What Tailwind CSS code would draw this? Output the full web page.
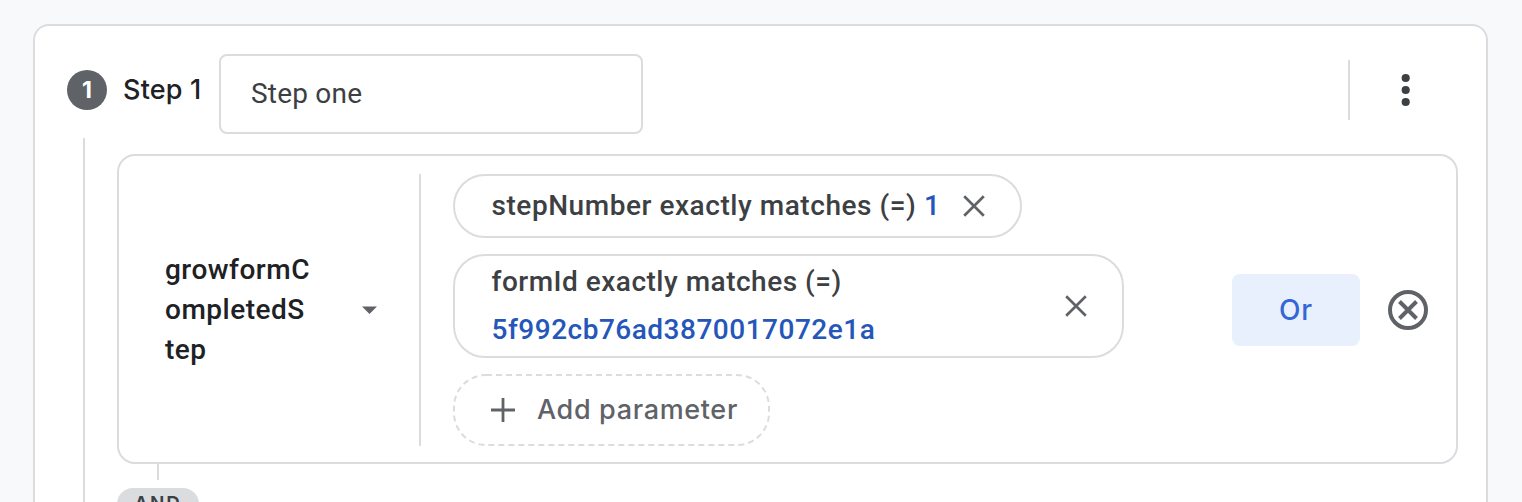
<!DOCTYPE html>
<html lang="en">
<head>
<meta charset="utf-8">
<title>Step editor</title>
<script src="https://cdn.jsdelivr.net/npm/@tailwindcss/browser@4"></script>
</head>
<body class="h-[502px] overflow-hidden bg-[#f8f9fa] pt-6 pl-[33px] font-['Roboto',sans-serif] text-[28px] text-[#202124]">
<main class="h-[478px] w-[1455px] overflow-hidden rounded-t-[16px] border-2 border-b-0 border-[#dadce0] bg-white pt-7">
  <header class="flex h-20 items-start pl-8">
    <div class="mt-4 flex size-10 items-center justify-center rounded-full bg-[#5f6368] font-['Inter',sans-serif] text-[23px] font-bold text-white">1</div>
    <div class="mt-4 ml-4 w-24 font-['Inter',sans-serif] text-[27px] leading-10 font-medium whitespace-nowrap tracking-[0.2px]">Step 1</div>
    <div class="h-20 w-[424px] rounded-lg border-2 border-[#dadce0] pl-[30px] leading-[76px] tracking-[0.2px] text-[#3c4043]">Step one</div>
    <div class="mt-1.5 ml-[705px] h-[60px] w-0.5 bg-[#dadce0]"></div>
    <svg class="mt-4 ml-[35px] size-10" viewBox="0 0 40 40" fill="#3c4043"><circle cx="20.7" cy="8" r="4.1"/><circle cx="20.7" cy="20" r="4.1"/><circle cx="20.7" cy="32" r="4.1"/></svg>
  </header>
  <div class="flex pl-12">
    <div class="mt-1 h-[366px] w-0.5 bg-[#dadce0]"></div>
    <div class="mt-5 ml-8">
      <section class="flex h-[310px] w-[1341px] items-center rounded-[18px] border-2 border-[#dadce0] pt-0.5">
        <div class="flex h-[272px] w-[302px] items-center border-r-2 border-[#dadce0] pl-[46px]">
          <div class="w-[160px] leading-10 font-medium tracking-[0.5px]">growformC<br>ompletedS<br>tep</div>
          <svg class="ml-[37px] h-2 w-[15px]" viewBox="0 0 15 8" fill="#5f6368"><path d="M0 .5h15L7.5 8z"/></svg>
        </div>
        <div class="ml-8 flex w-[779px] flex-col gap-4 font-medium text-[#3c4043]">
          <div class="flex h-16 w-[569px] items-center rounded-full border-2 border-[#dadce0] pl-[36.5px]">
            <div class="w-[471.5px] whitespace-nowrap tracking-[0.55px]">stepNumber exactly matches (=) <span class="text-[#2556b9]">1</span></div>
            <svg class="size-[22px]" viewBox="0 0 22 22" fill="none" stroke="#5f6368" stroke-width="2.7"><path d="M1.2 1.2l19.6 19.6M20.8 1.2L1.2 20.8"/></svg>
          </div>
          <div class="flex h-[104px] w-[671px] items-center rounded-[32px] border-2 border-[#dadce0] pl-[36.5px]">
            <div class="w-[573.5px] leading-12 whitespace-nowrap tracking-[0.5px]">formId exactly matches (=)<br><span class="text-[#2556b9]">5f992cb76ad3870017072e1a</span></div>
            <svg class="size-[22px]" viewBox="0 0 22 22" fill="none" stroke="#5f6368" stroke-width="2.7"><path d="M1.2 1.2l19.6 19.6M20.8 1.2L1.2 20.8"/></svg>
          </div>
          <div class="relative flex h-[72px] w-[317px] items-center pl-[38px] font-['Inter',sans-serif] text-[27px] text-[#5f6368]">
            <svg class="absolute inset-0 h-[72px] w-[317px]" viewBox="0 0 317 72" fill="none" stroke="#dadce0" stroke-width="2"><rect x="1" y="1" width="315" height="70" rx="32" stroke-dasharray="6 4"/></svg>
            <svg class="mr-[22px] size-6" viewBox="0 0 24 24" fill="none" stroke="#5f6368" stroke-width="2.8"><path d="M12 0v24M0 12h24"/></svg>
            <span class="whitespace-nowrap tracking-[0.65px]">Add parameter</span>
          </div>
        </div>
        <div class="flex h-[72px] w-32 items-center justify-center rounded-lg bg-[#e8f0fe] font-['Inter',sans-serif] text-[28px] font-medium tracking-[0.8px] text-[#3367d6]">Or</div>
        <svg class="ml-7 size-10" viewBox="0 0 40 40" fill="none" stroke="#5f6368" stroke-width="4"><circle cx="20" cy="20" r="18"/><path d="M11.5 11.5l17 17M28.5 11.5l-17 17"/></svg>
      </section>
      <div class="ml-10 h-4 w-0.5 bg-[#dadce0]"></div>
      <div class="mt-2 flex h-8 w-[82px] items-center justify-center rounded-full bg-[#dadce0] font-['Inter',sans-serif] text-[19px] font-semibold tracking-[1.8px] text-[#3c4043]">AND</div>
    </div>
  </div>
</main>
</body>
</html>
